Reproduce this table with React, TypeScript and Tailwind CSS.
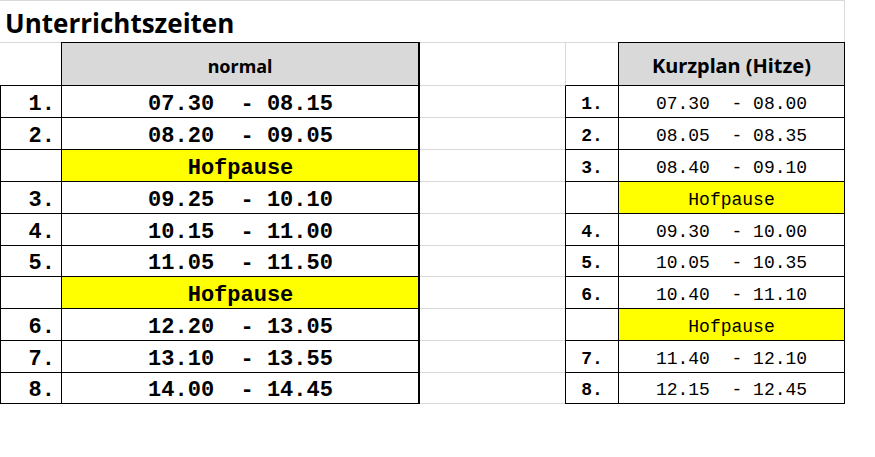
const mono = { fontFamily: '"Liberation Mono", "Courier New", monospace' };

type Row = { n: string; t: string; h: number };

const leftRows: Row[] = [
  { n: "1.", t: "07.30  - 08.15", h: 32 },
  { n: "2.", t: "08.20  - 09.05", h: 32 },
  { n: "", t: "Hofpause", h: 32 },
  { n: "3.", t: "09.25  - 10.10", h: 32 },
  { n: "4.", t: "10.15  - 11.00", h: 32 },
  { n: "5.", t: "11.05  - 11.50", h: 31 },
  { n: "", t: "Hofpause", h: 32 },
  { n: "6.", t: "12.20  - 13.05", h: 32 },
  { n: "7.", t: "13.10  - 13.55", h: 32 },
  { n: "8.", t: "14.00  - 14.45", h: 31 },
];

const rightRows: Row[] = [
  { n: "1.", t: "07.30  - 08.00", h: 32 },
  { n: "2.", t: "08.05  - 08.35", h: 32 },
  { n: "3.", t: "08.40  - 09.10", h: 32 },
  { n: "", t: "Hofpause", h: 32 },
  { n: "4.", t: "09.30  - 10.00", h: 32 },
  { n: "5.", t: "10.05  - 10.35", h: 31 },
  { n: "6.", t: "10.40  - 11.10", h: 32 },
  { n: "", t: "Hofpause", h: 32 },
  { n: "7.", t: "11.40  - 12.10", h: 32 },
  { n: "8.", t: "12.15  - 12.45", h: 31 },
];

export default function App() {
  return (
    <div className="w-[875px] h-[457px] bg-white text-black overflow-hidden">
      {/* Titel */}
      <div className="w-[845px] h-[42px] border-t border-r border-[#d9d9d9] flex items-center pl-[5px] pt-[2px]">
        <span
          className="text-[26px] font-bold leading-none"
          style={{ fontFamily: "'Open Sans', sans-serif" }}
        >
          Unterrichtszeiten
        </span>
      </div>

      {/* Kopfzeile */}
      <div className="flex h-[44px]" style={{ fontFamily: "Tahoma, 'Noto Sans', sans-serif" }}>
        <div className="w-[61px] border-t border-t-[#d9d9d9] border-b border-b-black" />
        <div className="w-[359px] bg-[#d9d9d9] border-t border-l border-b border-r-2 border-black flex items-center justify-center pt-[4px] text-[18px] font-bold">
          normal
        </div>
        <div className="w-[145px] border-t border-b border-[#d9d9d9]" />
        <div className="w-[53px] border-t border-l border-t-[#d9d9d9] border-l-[#d9d9d9] border-b border-b-black" />
        <div className="w-[227px] bg-[#d9d9d9] border border-black flex items-center justify-center pt-[4px] text-[20px] font-bold">
          Kurzplan (Hitze)
        </div>
      </div>

      {/* Zeilen */}
      {leftRows.map((l, i) => {
        const r = rightRows[i];
        return (
          <div key={i} className="flex" style={{ height: l.h }}>
            <div
              className="w-[61px] border-l border-b border-black flex items-center justify-end pr-[6px] pt-[5px] text-[22px] font-bold"
              style={mono}
            >
              {l.n}
            </div>
            <div
              className={
                "w-[359px] border-l border-b border-r-2 border-black flex items-center justify-center pl-[1px] pt-[5px] text-[22px] font-bold whitespace-pre " +
                (l.n === "" ? "bg-[#ffff00]" : "")
              }
              style={mono}
            >
              {l.t}
            </div>
            <div className="w-[145px] border-b border-[#d9d9d9]" />
            <div
              className="w-[53px] border-l border-b border-black flex items-center justify-center pt-[5px] text-[18px] font-bold"
              style={mono}
            >
              {r.n}
            </div>
            <div
              className={
                "w-[227px] border-l border-r border-b border-black flex items-center justify-center pt-[5px] text-[18px] whitespace-pre " +
                (r.n === "" ? "bg-[#ffff00]" : "")
              }
              style={mono}
            >
              {r.t}
            </div>
          </div>
        );
      })}
    </div>
  );
}
